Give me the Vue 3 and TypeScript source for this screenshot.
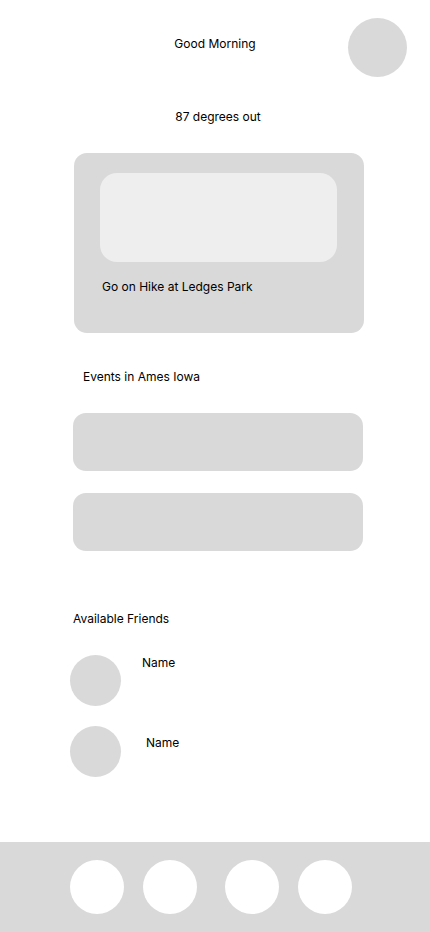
<script setup lang="ts">
interface Friend {
  id: number
  name: string
  placement: 'near' | 'far'
}

const events: number[] = [1, 2]

const friends: Friend[] = [
  { id: 1, name: 'Name', placement: 'near' },
  { id: 2, name: 'Name', placement: 'far' },
]

const navGroups: string[][] = [
  ['Home', 'Events'],
  ['Friends', 'Settings'],
]
</script>

<template>
  <div class="screen">
    <header class="header">
      <h1 class="greeting">Good Morning</h1>
      <button class="profile" type="button" aria-label="Profile"></button>
    </header>

    <main class="content">
      <p class="weather">87 degrees out</p>

      <section class="today">
        <article class="feature">
          <div class="feature-image"></div>
          <h2 class="feature-title">Go on Hike at Ledges Park</h2>
        </article>
      </section>

      <section class="events">
        <h2 class="events-title">Events in Ames Iowa</h2>
        <ul class="event-list">
          <li v-for="event in events" :key="event" class="event"></li>
        </ul>
      </section>

      <section class="friends">
        <h2 class="friends-title">Available Friends</h2>
        <ul class="friend-list">
          <li v-for="friend in friends" :key="friend.id" class="friend" :class="friend.placement">
            <span class="avatar"></span>
            <span class="friend-name">{{ friend.name }}</span>
          </li>
        </ul>
      </section>
    </main>

    <nav class="nav" aria-label="Main">
      <div v-for="(group, index) in navGroups" :key="index" class="nav-group">
        <button v-for="label in group" :key="label" class="nav-item" type="button" :aria-label="label"></button>
      </div>
    </nav>
  </div>
</template>

<style>
body {
  margin: 0;
  background: #ffffff;
}
</style>

<style scoped>
.screen {
  box-sizing: border-box;
  display: flex;
  flex-direction: column;
  min-height: 100vh;
  font-family: Inter, "Liberation Sans", sans-serif;
  font-size: 12px;
  line-height: 16px;
  color: #000000;
}

h1,
h2,
p,
ul {
  margin: 0;
  padding: 0;
  font-size: inherit;
  font-weight: 400;
  list-style: none;
}

button {
  padding: 0;
  border: 0;
  border-radius: 50%;
  cursor: pointer;
}

.header {
  display: grid;
  grid-template-columns: 1fr auto 1fr;
  align-items: start;
  padding: 18px 23px 0;
}

.greeting {
  grid-column: 2;
  padding-top: 18px;
}

.profile {
  justify-self: end;
  width: 59px;
  height: 59px;
  background: #d9d9d9;
}

.content {
  flex: 1;
  padding: 32px 0;
}

.weather {
  padding: 0 67px 0 73px;
  text-align: center;
}

.today {
  padding: 28px 66px 0 74px;
}

.feature {
  padding: 20px 27px 38px 26px;
  border-radius: 13px;
  background: #d9d9d9;
}

.feature-image {
  height: 89px;
  border-radius: 17px;
  background: #eeeeee;
}

.feature-title {
  padding: 17px 2px 0;
}

.events {
  padding: 36px 67px 0 73px;
}

.events-title {
  padding-left: 10px;
}

.event-list {
  display: grid;
  gap: 22px;
  margin-top: 28px;
}

.event {
  height: 58px;
  border-radius: 13px;
  background: #d9d9d9;
}

.friends {
  padding: 60px 67px 0 70px;
}

.friends-title {
  padding-left: 3px;
}

.friend-list {
  display: grid;
  gap: 20px;
  margin-top: 28px;
}

.friend {
  display: flex;
  align-items: flex-start;
  gap: 21px;
}

.friend.far {
  gap: 25px;
}

.friend.far .friend-name {
  padding-top: 9px;
}

.avatar {
  flex: none;
  width: 51px;
  height: 51px;
  border-radius: 50%;
  background: #d9d9d9;
}

.nav {
  display: flex;
  justify-content: center;
  gap: 28px;
  padding: 18px 78px 18px 70px;
  background: #d9d9d9;
}

.nav-group {
  display: flex;
  gap: 19px;
}

.nav-item {
  width: 54px;
  height: 54px;
  background: #ffffff;
}
</style>
